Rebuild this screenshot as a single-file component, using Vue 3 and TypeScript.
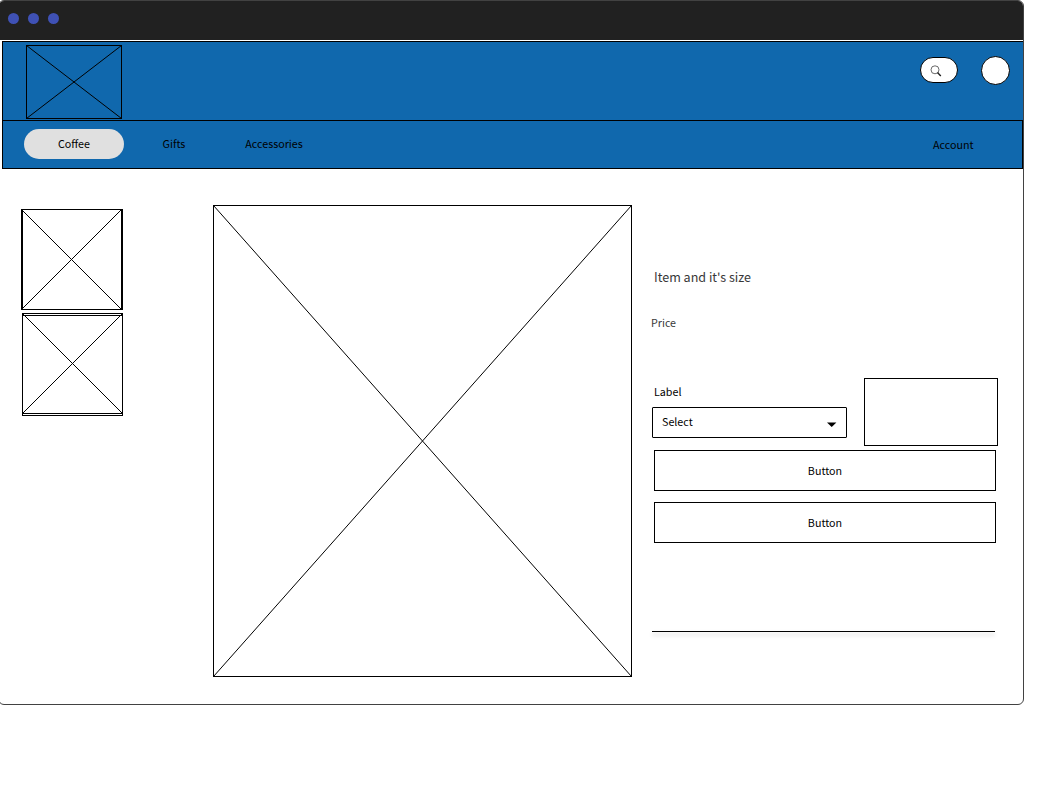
<script setup lang="ts">
interface NavItem {
  label: string
  active: boolean
}

const navItems: NavItem[] = [
  { label: 'Coffee', active: true },
  { label: 'Gifts', active: false },
  { label: 'Accessories', active: false },
]
const actions: string[] = ['Button', 'Button']
</script>

<template>
  <div class="window">
    <div class="titlebar">
      <span v-for="n in 3" :key="n" class="dot"></span>
    </div>

    <header class="header">
      <svg class="logo" width="96" height="74" viewBox="0 0 96 74">
        <rect x="0.5" y="0.5" width="95" height="73" />
        <path d="M0.5 0.5L95.5 73.5M95.5 0.5L0.5 73.5" />
      </svg>
      <div class="tools">
        <div class="search">
          <svg width="12" height="12" viewBox="0 0 12 12">
            <circle class="lens" cx="5" cy="4.8" r="4" />
            <path class="handle" d="M7.5 7.5L10.8 11" />
          </svg>
        </div>
        <div class="avatar"></div>
      </div>
    </header>

    <nav class="nav">
      <a v-for="item in navItems" :key="item.label" class="nav-item" :class="{ active: item.active }">{{ item.label }}</a>
      <a class="account">Account</a>
    </nav>

    <main class="product">
      <div class="thumbs">
        <svg width="102" height="101" viewBox="0 0 102 101" shape-rendering="crispEdges">
          <path class="ink" d="M0 0H102V101H0ZM2 1V100H100V1Z" fill-rule="evenodd" />
          <path d="M0.5 0.5L100.5 100.5M100.5 0.5L0.5 100.5" />
        </svg>
        <svg class="second" width="101" height="103" viewBox="0 0 101 103" shape-rendering="crispEdges">
          <rect x="0.5" y="0.5" width="100" height="102" />
          <path d="M0 2.5H101M0 100.5H101M0.5 0.5L100.5 100.5M100.5 0.5L0.5 100.5" />
        </svg>
      </div>

      <svg class="photo" width="419" height="472" viewBox="0 0 419 472">
        <rect x="0.5" y="0.5" width="418" height="471" />
        <path d="M0.5 0.5L418.5 471.5M418.5 0.5L0.5 471.5" />
      </svg>

      <section class="details">
        <h1 class="title">Item and it's size</h1>
        <p class="price">Price</p>
        <div class="options">
          <div class="field">
            <label class="label">Label</label>
            <div class="select">
              <span class="value">Select</span>
              <svg width="10" height="5" viewBox="0 0 10 5"><path class="ink" d="M0 0.5H9.4L4.7 5Z" /></svg>
            </div>
          </div>
          <div class="box"></div>
        </div>
        <button v-for="(action, i) in actions" :key="i" class="button">{{ action }}</button>
        <div class="divider"></div>
      </section>
    </main>
  </div>
</template>

<style>
body {
  background: #fff;
  overflow: hidden;
}
</style>

<style scoped>
.window {
  box-sizing: border-box;
  width: 1026px;
  height: 705px;
  margin-left: -2px;
  border: 1px solid #424242;
  border-radius: 6px;
  overflow: hidden;
  background: #fff;
  color: #000;
  font: 10.72px/18px "Noto Sans CJK SC", sans-serif;
}
svg {
  display: block;
  fill: none;
  stroke: #000;
  stroke-width: 1;
}
.ink {
  fill: #000;
  stroke: none;
}
.titlebar {
  display: flex;
  gap: 9px;
  height: 39px;
  padding: 12px 0 0 9px;
  box-sizing: border-box;
  background: #212121;
}
.dot {
  width: 11px;
  height: 11px;
  border-radius: 50%;
  background: #3f51b5;
}
.header {
  box-sizing: border-box;
  display: flex;
  justify-content: space-between;
  height: 79px;
  margin: 1px -1px 0 3px;
  padding: 3px 13px 0 23px;
  border: 1px solid #000;
  border-bottom: 0;
  background: #1068ad;
}
.tools {
  display: flex;
  gap: 23px;
  padding-top: 11px;
}
.search {
  box-sizing: border-box;
  width: 38px;
  height: 26px;
  margin-top: 1px;
  padding: 7px 0 0 9px;
  border: 1px solid #000;
  border-radius: 13px;
  background: #fff;
}
.lens {
  stroke: #444;
  stroke-width: 0.8;
}
.handle {
  stroke: #222;
  stroke-width: 1.4;
}
.avatar {
  box-sizing: border-box;
  width: 29px;
  height: 29px;
  border: 1px solid #000;
  border-radius: 50%;
  background: #fff;
}
.nav {
  box-sizing: border-box;
  display: flex;
  align-items: flex-start;
  height: 49px;
  margin: 0 0 0 3px;
  padding: 8px 48.5px 0 21px;
  border: 1px solid #000;
  background: #1068ad;
}
.nav-item {
  width: 100px;
  line-height: 30px;
  text-align: center;
  border-radius: 15px;
}
.active {
  background: #e0e0e0;
}
.account {
  margin-left: auto;
  line-height: 32px;
}
.product {
  display: flex;
  align-items: flex-start;
  padding: 36px 0 0 22px;
}
.thumbs {
  display: grid;
  gap: 3px;
  width: 102px;
  padding-top: 4px;
}
.second {
  margin-left: 1px;
}
.photo {
  margin-left: 90px;
}
.details {
  width: 347px;
  margin-left: 19px;
  padding-top: 62px;
}
.title {
  margin: 0 0 0 3px;
  font-size: 12.55px;
  line-height: 20px;
  font-weight: 400;
  color: #383838;
}
.price {
  margin: 27px 0 0;
  color: #383838;
}
.options {
  display: flex;
  justify-content: space-between;
  height: 68px;
  margin: 46px 0 4px 1px;
}
.label {
  display: block;
  margin: 5px 0 6px 2px;
}
.select {
  box-sizing: border-box;
  display: flex;
  align-items: center;
  justify-content: space-between;
  width: 195px;
  height: 31px;
  padding: 0 9px 0 9px;
  border: 1px solid #000;
  border-radius: 1px;
}
.value {
  margin-bottom: 2px;
}
.select svg {
  margin-top: 3px;
}
.box {
  box-sizing: border-box;
  width: 134px;
  height: 68px;
  border: 1px solid #000;
}
.button {
  box-sizing: border-box;
  display: block;
  width: 342px;
  height: 41px;
  margin: 0 0 11px 3px;
  padding: 0;
  border: 1px solid #000;
  background: #fff;
  color: #000;
  font: inherit;
}
.divider {
  width: 343px;
  height: 1px;
  margin: 88px 0 0 1px;
  background: #000;
  box-shadow: 0 3px 4px rgba(0, 0, 0, 0.25);
}
</style>
